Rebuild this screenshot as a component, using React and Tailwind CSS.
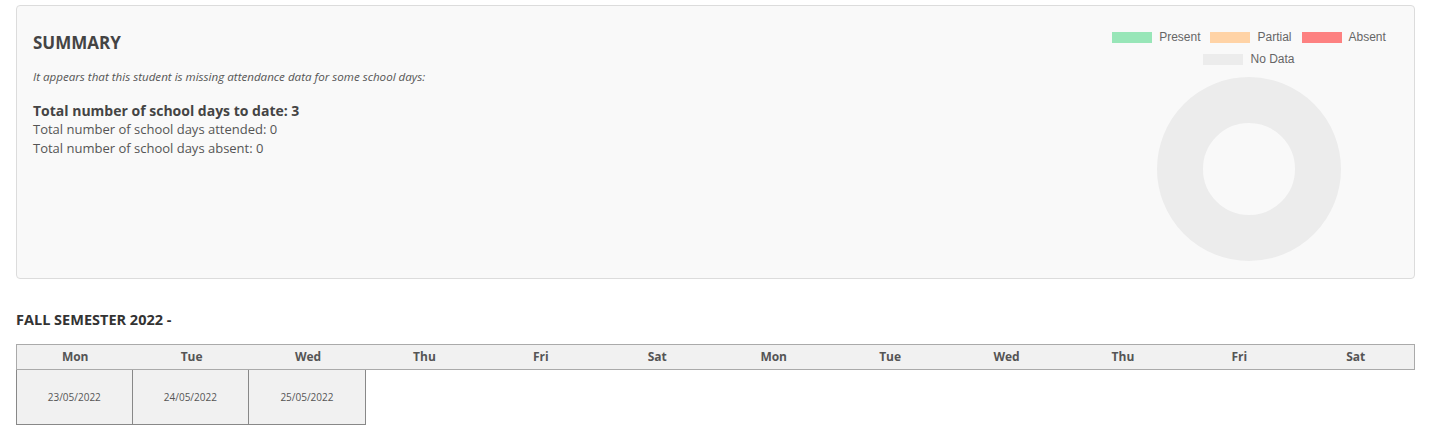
const LEGEND = [
  { label: "Present", color: "bg-[#98e6b8]" },
  { label: "Partial", color: "bg-[#ffd3a6]" },
  { label: "Absent", color: "bg-[#fd8181]" },
];

const DAYS = ["Mon", "Tue", "Wed", "Thu", "Fri", "Sat", "Mon", "Tue", "Wed", "Thu", "Fri", "Sat"];
const DATES = ["23/05/2022", "24/05/2022", "25/05/2022"];

const LegendItem = ({ label, color }) => (
  <div className="flex items-center gap-[7px]">
    <span className={`block w-[40px] h-[11px] ${color}`} />
    <span className="text-[12px] leading-[14px] text-[#666]">{label}</span>
  </div>
);

// Donut chart, only "no data" slice
const Donut = () => (
  <svg width="186" height="186" viewBox="0 0 186 186">
    <circle cx="93" cy="93" r="69" fill="none" stroke="#ececec" strokeWidth="46" />
  </svg>
);

export default function App() {
  return (
    <div className="w-[1442px] h-[447px] bg-white text-[#444]" style={{ fontFamily: '"Open Sans", "Noto Sans", sans-serif' }}>
      {/* Summary card */}
      <div className="ml-4 mt-[5px] w-[1399px] h-[274px] border border-[#dcdcdc] rounded bg-[#f9f9f9] flex">
        <div className="flex-1 pl-4 pt-[27px]">
          <h2 className="text-[17px] leading-[20px] font-bold text-[#444]">SUMMARY</h2>
          <p className="mt-[17px] text-[11.6px] leading-[14px] italic text-[#555]">
            It appears that this student is missing attendance data for some school days:
          </p>
          <div className="mt-[17px] text-[13px] leading-[19px] text-[#555]">
            <p className="font-bold text-[14px] text-[#444]">Total number of school days to date: 3</p>
            <p>Total number of school days attended: 0</p>
            <p>Total number of school days absent: 0</p>
          </div>
        </div>

        <div
          className="w-[300px] mr-[15px] flex flex-col items-center pt-[24px]"
          style={{ fontFamily: '"Liberation Sans", Arial, sans-serif' }}
        >
          <div className="flex gap-[10px]">
            {LEGEND.map((l) => (
              <LegendItem key={l.label} {...l} />
            ))}
          </div>
          <div className="mt-[8px]">
            <LegendItem label="No Data" color="bg-[#ececec]" />
          </div>
          <div className="mt-[10px]">
            <Donut />
          </div>
        </div>
      </div>

      {/* Semester calendar */}
      <div className="ml-4 w-[1399px] mt-[32px]">
        <h3 className="text-[14.5px] leading-[18px] font-bold text-[#333]">FALL SEMESTER 2022 -</h3>
        <div className="mt-[15px] grid grid-cols-12 border border-[#aaa] bg-[#f1f1f1]">
          {DAYS.map((d, i) => (
            <div key={i} className="h-[24px] flex items-center justify-center text-[12px] font-bold text-[#555]">
              {d}
            </div>
          ))}
        </div>
        <div className="grid grid-cols-12">
          {DATES.map((d, i) => (
            <div
              key={d}
              className={`h-[55px] bg-[#f1f1f1] border-b border-r border-[#888] flex items-center justify-center text-[10px] text-[#555] ${i === 0 ? "border-l" : ""}`}
            >
              {d}
            </div>
          ))}
        </div>
      </div>
    </div>
  );
}
